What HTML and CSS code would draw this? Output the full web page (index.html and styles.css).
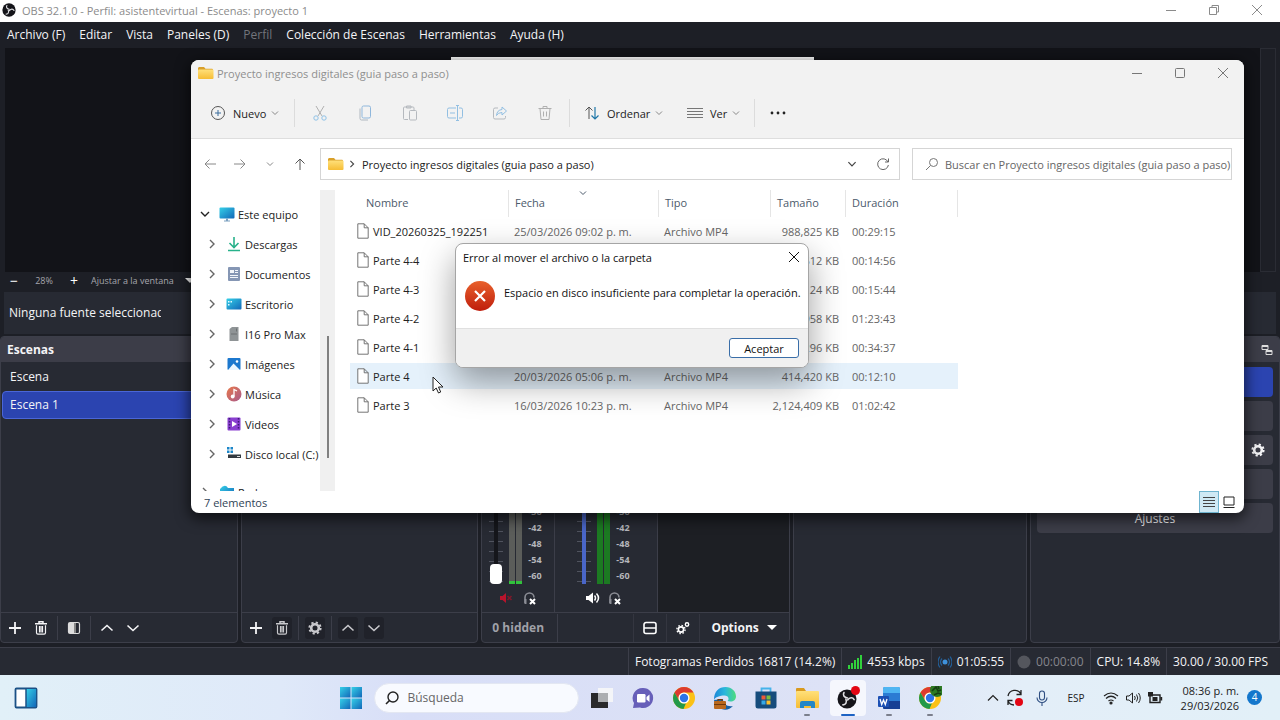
FILE: index.html
```html
<!DOCTYPE html>
<html lang="es">
<head>
    <meta charset="UTF-8">
    <meta name="viewport" content="width=device-width, initial-scale=1.0">
    <title>OBS 32.1.0 - Perfil: asistentevirtual - Escenas: proyecto 1</title>
    <link rel="stylesheet" href="styles.css">
</head>
<body>

    <!-- Iconos que se repiten -->
    <svg class="sprite" width="0" height="0">
        <defs>
            <linearGradient id="gFolder" x1="0" y1="0" x2="0" y2="1"><stop offset="0" stop-color="#ffe07a"/><stop offset="1" stop-color="#f6bd35"/></linearGradient>
            <linearGradient id="gBlue" x1="0" y1="0" x2="1" y2="1"><stop offset="0" stop-color="#35d0e8"/><stop offset="1" stop-color="#1267b8"/></linearGradient>
            <linearGradient id="gRed" x1="0" y1="0" x2="0" y2="1"><stop offset="0" stop-color="#e8612c"/><stop offset="1" stop-color="#bf1d0c"/></linearGradient>
            <linearGradient id="gEdge" x1="0" y1="0" x2="1" y2="0"><stop offset="0" stop-color="#1b86d8"/><stop offset=".5" stop-color="#2bb8dc"/><stop offset="1" stop-color="#4fdc7c"/></linearGradient>
            <linearGradient id="gMusic" x1="0" y1="0" x2="1" y2="1"><stop offset="0" stop-color="#e8784a"/><stop offset="1" stop-color="#a85a8c"/></linearGradient>
        </defs>
        <symbol id="down" viewBox="0 0 10 10"><path d="M2 3.5 5 6.5 8 3.5" fill="none" stroke="currentColor"/></symbol>
        <symbol id="right" viewBox="0 0 10 10"><path d="M3 1 7 5 3 9" fill="none" stroke="currentColor" stroke-width="1.4"/></symbol>
        <symbol id="min" viewBox="0 0 12 12"><path d="M1 6.5h10" stroke="currentColor"/></symbol>
        <symbol id="close" viewBox="0 0 12 12"><path d="M1 1 11 11M11 1 1 11" stroke="currentColor" stroke-width="1"/></symbol>
        <symbol id="folder" viewBox="0 0 16 14"><path d="M0 2.500C0 1.600.6 1 1.500 1H6l1.500 1.800H14a1 1 0 0 1 1 1V6H0z" fill="#d9a02a"/><rect x="0" y="3.500" width="15.500" height="9.500" rx="1" fill="url(#gFolder)"/></symbol>
        <symbol id="file" viewBox="0 0 12 16"><path d="M.8.8h6.400l4 4v10.400H.8zM7.200.8v4h4" fill="#fff" stroke="#666" stroke-width=".9"/></symbol>
        <symbol id="plus" viewBox="0 0 12 12"><path d="M6 0v12M0 6h12" stroke="currentColor" stroke-width="1.8"/></symbol>
        <symbol id="trash" viewBox="0 0 14 14"><path d="M1 2.800h12M5 2V.8h4V2" fill="none" stroke="currentColor" stroke-width="1.500"/><path d="M2.500 4.200v7.600c0 1 .6 1.400 1.400 1.400h6.200c.9 0 1.400-.5 1.400-1.400V4.200M5.500 5v6.500M7 5v6.500M8.500 5v6.500" fill="none" stroke="currentColor" stroke-width="1.200"/></symbol>
        <symbol id="gear" viewBox="0 0 14 14"><circle cx="7" cy="7" r="3.800" fill="none" stroke="currentColor" stroke-width="2.600"/><circle cx="7" cy="7" r="5.600" fill="none" stroke="currentColor" stroke-width="2" stroke-dasharray="2.200 2.198"/></symbol>
        <symbol id="up-obs" viewBox="0 0 14 14"><path d="M1.500 9.500 7 4.500 12.500 9.500" fill="none" stroke="currentColor" stroke-width="1.600"/></symbol>
        <symbol id="down-obs" viewBox="0 0 14 14"><path d="M1.500 4.500 7 9.500 12.500 4.500" fill="none" stroke="currentColor" stroke-width="1.600"/></symbol>
        <symbol id="lens" viewBox="0 0 14 14"><circle cx="8.500" cy="5.500" r="4" fill="none" stroke="currentColor"/><path d="M5.500 8.500 1 13" stroke="currentColor"/></symbol>
        <symbol id="obs" viewBox="0 0 20 20"><circle cx="10" cy="10" r="9.500" fill="#15151a"/><g fill="none" stroke="#e0e0e4" stroke-width="1.600" stroke-linecap="round"><path d="M10.500 9C7 8.500 5.500 6 7 3.500"/><path d="M10.500 9C7 8.500 5.500 6 7 3.500" transform="rotate(120 10 10)"/><path d="M10.500 9C7 8.500 5.500 6 7 3.500" transform="rotate(240 10 10)"/></g></symbol>
        <symbol id="chrome" viewBox="0 0 24 24"><circle cx="12" cy="12" r="11" fill="#fbc116"/><path d="M2.500 6.500A11 11 0 0 1 21.500 6.500H12a5.500 5.500 0 0 0-4.800 8.200z" fill="#dd3b2f"/><path d="M2.500 6.500 7.200 14.700A5.500 5.500 0 0 0 14 17.100L11.500 23A11 11 0 0 1 2.500 6.500z" fill="#22994a"/><circle cx="12" cy="12" r="5.500" fill="#fff"/><circle cx="12" cy="12" r="4.200" fill="#2d74e8"/></symbol>
        <symbol id="phones" viewBox="0 0 14 14"><path d="M2 12V6.500a4.500 4.500 0 0 1 9 0" fill="none" stroke="#8b8d95" stroke-width="1.600"/><path d="M1.500 8h2v5h-2z" fill="#8b8d95"/><path d="M7 8l5 5M12 8l-5 5" stroke="#fff" stroke-width="2"/></symbol>
    </svg>

    <!-- Ventana de OBS -->
    <main class="obs">
        <header class="obs-title">
            <svg class="ic14"><use href="#obs"/></svg>
            <span>OBS 32.1.0 - Perfil: asistentevirtual - Escenas: proyecto 1</span>
            <div class="win-buttons">
                <button aria-label="Minimizar"><svg class="ic12"><use href="#min"/></svg></button>
                <button aria-label="Restaurar"><svg class="ic12" viewBox="0 0 12 12"><path d="M1.500 3.500h7v7h-7zM4 3V1.500h6.500V8H9" fill="none" stroke="currentColor"/></svg></button>
                <button aria-label="Cerrar"><svg class="ic12"><use href="#close"/></svg></button>
            </div>
        </header>
        <nav class="obs-menu">
            <a href="#">Archivo (F)</a>
            <a href="#">Editar</a>
            <a href="#">Vista</a>
            <a href="#">Paneles (D)</a>
            <a href="#" class="off">Perfil</a>
            <a href="#">Colección de Escenas</a>
            <a href="#">Herramientas</a>
            <a href="#">Ayuda (H)</a>
        </nav>

        <section class="preview">
            <div class="preview-area"><div class="canvas"></div></div>
            <div class="preview-scroll"></div>
        </section>
        <div class="zoom-row">
            <button aria-label="Alejar">−</button>
            <span class="zoom-value">28%</span>
            <button aria-label="Acercar">+</button>
            <span class="zoom-fit">Ajustar a la ventana</span>
            <i class="caret"></i>
        </div>
        <div class="context-bar"><span>Ninguna fuente seleccionada</span></div>

        <div class="docks">
            <section class="dock">
                <h2>Escenas</h2>
                <ul class="scenes">
                    <li>Escena</li>
                    <li class="selected">Escena 1</li>
                </ul>
                <footer class="dock-tools">
                    <button aria-label="Añadir"><svg class="ic12"><use href="#plus"/></svg></button>
                    <button aria-label="Eliminar"><svg class="ic14"><use href="#trash"/></svg></button>
                    <hr>
                    <button aria-label="Filtros"><svg class="ic14" viewBox="0 0 14 14"><rect x="1.500" y="1.500" width="11" height="11" rx="1.500" fill="none" stroke="#ddd" stroke-width="1.200"/><path d="M2 2h5v10H2z" fill="#ddd"/><path d="M7 2h2v10H7z" fill="#888"/></svg></button>
                    <hr>
                    <button aria-label="Subir"><svg class="ic14"><use href="#up-obs"/></svg></button>
                    <button aria-label="Bajar"><svg class="ic14"><use href="#down-obs"/></svg></button>
                </footer>
            </section>

            <section class="dock">
                <h2></h2>
                <div class="dock-body"></div>
                <footer class="dock-tools">
                    <button aria-label="Añadir"><svg class="ic12"><use href="#plus"/></svg></button>
                    <button class="dim" aria-label="Eliminar"><svg class="ic14"><use href="#trash"/></svg></button>
                    <hr>
                    <button class="dim" aria-label="Propiedades"><svg class="ic14"><use href="#gear"/></svg></button>
                    <hr>
                    <button class="dim" aria-label="Subir"><svg class="ic14"><use href="#up-obs"/></svg></button>
                    <button class="dim" aria-label="Bajar"><svg class="ic14"><use href="#down-obs"/></svg></button>
                </footer>
            </section>

            <section class="dock">
                <h2></h2>
                <div class="mixer">
                    <div class="channel muted">
                        <div class="levels">
                            <input type="range" class="fader" value="0" aria-label="Volumen del micrófono">
                            <div class="meter"><i></i><i></i></div>
                            <ol><li>-36</li><li>-42</li><li>-48</li><li>-54</li><li>-60</li></ol>
                        </div>
                        <div class="channel-buttons">
                            <button aria-label="Silenciar"><svg class="ic14" viewBox="0 0 14 14"><path d="M1 5h2.500L7 2v10L3.500 9H1z" fill="#b8142c"/><path d="M8.500 5l4 4M12.500 5l-4 4" stroke="#7d1a2b" stroke-width="1.600"/></svg></button>
                            <button aria-label="Monitorizar"><svg class="ic14"><use href="#phones"/></svg></button>
                        </div>
                    </div>
                    <div class="channel live">
                        <div class="levels">
                            <input type="range" class="fader" value="100" aria-label="Volumen del escritorio">
                            <div class="meter"><i></i><i></i></div>
                            <ol><li>-36</li><li>-42</li><li>-48</li><li>-54</li><li>-60</li></ol>
                        </div>
                        <div class="channel-buttons">
                            <button aria-label="Silenciar"><svg class="ic14" viewBox="0 0 14 14"><path d="M0 5h2.500L7 1.500v11L2.500 9H0z" fill="#fff"/><path d="M8.500 4.500q2 2.500 0 5M10.500 2.500q4 4.500 0 9" fill="none" stroke="#fff" stroke-width="1.500"/></svg></button>
                            <button aria-label="Monitorizar"><svg class="ic14"><use href="#phones"/></svg></button>
                        </div>
                    </div>
                    <div class="mixer-empty"></div>
                </div>
                <footer class="dock-tools mixer-tools">
                    <span class="hidden-count">0 hidden</span>
                    <button aria-label="Distribución"><svg class="ic14" viewBox="0 0 14 14"><path d="M3 1.500h8a2 2 0 0 1 2 2v7a2 2 0 0 1-2 2H3a2 2 0 0 1-2-2v-7a2 2 0 0 1 2-2zM1 7h12" fill="none" stroke="#fff" stroke-width="1.600"/></svg></button>
                    <button aria-label="Propiedades avanzadas"><svg class="ic14" viewBox="0 0 14 14"><circle cx="5" cy="8.500" r="2.600" fill="none" stroke="#fff" stroke-width="1.600"/><circle cx="5" cy="8.500" r="4.100" fill="none" stroke="#fff" stroke-width="1.400" stroke-dasharray="1.500 1.720"/><circle cx="11" cy="3.500" r="1.700" fill="none" stroke="#fff" stroke-width="1.400"/></svg></button>
                    <button class="options">Options <i class="caret"></i></button>
                </footer>
            </section>

            <section class="dock">
                <h2></h2>
                <div class="dock-body"></div>
            </section>

            <section class="dock">
                <h2><svg class="ic12" viewBox="0 0 12 12"><path d="M1 1.500h6v4H1zM5 6.500h6v4H5z" fill="none" stroke="#ddd"/><path d="M1 2h6M5 7h6" stroke="#ddd" stroke-width="2"/></svg></h2>
                <div class="controls">
                    <button class="active"></button>
                    <button></button>
                    <button><svg class="ic14"><use href="#gear"/></svg></button>
                    <button></button>
                    <button>Ajustes</button>
                </div>
            </section>
        </div>

        <footer class="obs-status">
            <span>Fotogramas Perdidos 16817 (14.2%)</span>
            <span><svg class="ic14" viewBox="0 0 14 14"><path d="M0 10h2v4H0zM3 8h2v6H3zM6 5h2v9H6zM9 3h2v11H9zM12 0h2v14h-2z" fill="#31d23c"/></svg>4553 kbps</span>
            <span><svg class="ic14" viewBox="0 0 14 14"><circle cx="7" cy="7" r="2.500" fill="#3f92dc"/><path d="M4 3.500q-3 3.500 0 7M10 3.500q3 3.500 0 7M2 1.500q-4 5.500 0 11M12 1.500q4 5.500 0 11" fill="none" stroke="#235f98" stroke-width="1.200"/></svg>01:05:55</span>
            <span class="off"><svg class="ic14" viewBox="0 0 14 14"><circle cx="7" cy="7" r="6.500" fill="#54565d"/></svg>00:00:00</span>
            <span>CPU: 14.8%</span>
            <span>30.00 / 30.00 FPS</span>
        </footer>
    </main>

    <!-- Explorador de archivos -->
    <section class="explorer">
        <header class="exp-title">
            <svg class="folder"><use href="#folder"/></svg>
            <span>Proyecto ingresos digitales (guia paso a paso)</span>
            <div class="win-buttons">
                <button aria-label="Minimizar"><svg class="ic12"><use href="#min"/></svg></button>
                <button aria-label="Maximizar"><svg class="ic12" viewBox="0 0 12 12"><rect x="1.500" y="1.500" width="9" height="9" rx="1" fill="none" stroke="currentColor"/></svg></button>
                <button aria-label="Cerrar"><svg class="ic12"><use href="#close"/></svg></button>
            </div>
        </header>
        <div class="exp-tools">
            <button class="tool-new"><svg class="ic16" viewBox="0 0 16 16"><circle cx="8" cy="8" r="6.500" fill="none" stroke="#555"/><path d="M8 5v6M5 8h6" stroke="#3a6d9c"/></svg>Nuevo<svg class="ic10"><use href="#down"/></svg></button>
            <hr>
            <button class="tool-icon" aria-label="Cortar"><svg class="ic16" viewBox="0 0 16 16" fill="none"><path d="M4 1l6 10M12 1L6 11" stroke="#b0b0b0"/><circle cx="4" cy="13" r="2.200" stroke="#8fc1e6"/><circle cx="12" cy="13" r="2.200" stroke="#8fc1e6"/></svg></button>
            <button class="tool-icon" aria-label="Copiar"><svg class="ic16" viewBox="0 0 16 16" fill="none"><rect x="5" y="1" width="8.500" height="12" rx="1.500" stroke="#8fb7dc"/><path d="M3 3.500v10a1.500 1.500 0 0 0 1.500 1.500H11" stroke="#b0b8c0"/></svg></button>
            <button class="tool-icon" aria-label="Pegar"><svg class="ic16" viewBox="0 0 16 16" fill="none" stroke="#b5b9be"><path d="M6 14.500H2.500a1 1 0 0 1-1-1V3a1 1 0 0 1 1-1H11a1 1 0 0 1 1 1v2M4.500 1h4.500v2H4.500z"/><rect x="7.500" y="5.500" width="7" height="9.500" rx="1"/></svg></button>
            <button class="tool-icon" aria-label="Cambiar nombre"><svg class="ic16" viewBox="0 0 16 16" fill="none" stroke="#92bfe2"><path d="M9 3H2a1.500 1.500 0 0 0-1.500 1.500v7A1.500 1.500 0 0 0 2 13h7M12 3h2a1.500 1.500 0 0 1 1.500 1.500v7A1.500 1.500 0 0 1 14 13h-2M10.500 1v14M9 .500h3M9 15.500h3M3 8h5"/></svg></button>
            <button class="tool-icon" aria-label="Compartir"><svg class="ic16" viewBox="0 0 16 16" fill="none"><path d="M6 3H3a1.500 1.500 0 0 0-1.500 1.500v8A1.500 1.500 0 0 0 3 14h9a1.500 1.500 0 0 0 1.500-1.500V11" stroke="#b5b9be"/><path d="M10 2l4.500 4L10 10V7.500Q6 7.500 4.500 10.500 5 5 10 4.500z" stroke="#92bfe2"/></svg></button>
            <button class="tool-icon" aria-label="Eliminar"><svg class="ic16" viewBox="0 0 16 16" fill="none" stroke="#b0b0b0"><path d="M1.500 3.500h13M6 3.500V1.500h4v2M3 3.500l1 11h8l1-11M6.500 6.500v5M9.500 6.500v5"/></svg></button>
            <hr>
            <button class="tool-sort"><svg class="ic16" viewBox="0 0 16 16" fill="none"><path d="M5 14V2M1.500 5.500 5 2l3.500 3.500" stroke="#555"/><path d="M11 2v12M7.500 10.500 11 14l3.500-3.500" stroke="#1f77a8" stroke-width="1.200"/></svg>Ordenar<svg class="ic10"><use href="#down"/></svg></button>
            <button class="tool-view"><svg class="ic16" viewBox="0 0 16 16"><path d="M0 3.500h16M0 6.500h16M0 9.500h16M0 12.500h16" stroke="#777"/></svg>Ver<svg class="ic10"><use href="#down"/></svg></button>
            <hr>
            <button class="tool-more" aria-label="Más"><svg class="ic16" viewBox="0 0 16 16" fill="#222"><circle cx="2" cy="8" r="1.400"/><circle cx="8" cy="8" r="1.400"/><circle cx="14" cy="8" r="1.400"/></svg></button>
        </div>
        <div class="exp-nav">
            <div class="arrows">
                <button aria-label="Atrás"><svg class="ic12" viewBox="0 0 12 12" fill="none" stroke="#888"><path d="M12 6H1M5.500 1.500 1 6l4.500 4.500"/></svg></button>
                <button aria-label="Adelante"><svg class="ic12" viewBox="0 0 12 12" fill="none" stroke="#888"><path d="M0 6h11M6.500 1.500 11 6l-4.500 4.500"/></svg></button>
                <button aria-label="Recientes"><svg class="ic10"><use href="#down"/></svg></button>
                <button aria-label="Subir"><svg class="ic12" viewBox="0 0 12 12" fill="none" stroke="#555"><path d="M6 12V1M1.500 5.500 6 1l4.500 4.500"/></svg></button>
            </div>
            <div class="address">
                <svg class="folder"><use href="#folder"/></svg>
                <svg class="crumb"><use href="#right"/></svg>
                <span>Proyecto ingresos digitales (guia paso a paso)</span>
                <svg class="ic12"><use href="#down"/></svg>
                <svg class="reload ic14" viewBox="0 0 14 14" fill="none" stroke="#666"><path d="M12 5A5.400 5.400 0 1 0 12.400 8M12.500 1.500V5H9"/></svg>
            </div>
            <label class="search">
                <svg class="ic14"><use href="#lens"/></svg>
                <input type="text" placeholder="Buscar en Proyecto ingresos digitales (guia paso a paso)">
            </label>
        </div>
        <div class="exp-body">
            <ul class="tree">
                <li class="root"><svg class="arrow" viewBox="0 0 10 10"><path d="M1 3l4 4 4-4" fill="none" stroke="#222" stroke-width="1.400"/></svg><svg class="ic16" viewBox="0 0 16 16"><rect x=".500" y="1.500" width="15" height="11" rx="1" fill="url(#gBlue)"/><path d="M7 12.500h2v2h2v1H5v-1h2z" fill="#7a9fc0"/></svg>Este equipo</li>
                <li><svg class="arrow"><use href="#right"/></svg><svg class="ic16" viewBox="0 0 16 16" fill="none" stroke="#28b28b" stroke-width="1.600"><path d="M8 1v10M3.500 7 8 11.500 12.500 7M2 14.500h12"/></svg>Descargas</li>
                <li><svg class="arrow"><use href="#right"/></svg><svg class="ic16" viewBox="0 0 16 16"><rect x="2" y="1" width="12" height="14" rx="1" fill="#8596b4"/><path d="M4 4h4v3H4zM9 4h3v1H9zM9 6h3v1H9zM4 9h8v1H4zM4 11h8v1H4z" fill="#f2f5fa"/></svg>Documentos</li>
                <li><svg class="arrow"><use href="#right"/></svg><svg class="ic16" viewBox="0 0 16 16"><rect x=".500" y="2.500" width="15" height="11" rx="1" fill="url(#gBlue)"/><path d="M2 5h1.500v1.500H2zM2 8h1.500v1.500H2zM4.500 5H6v1.500H4.500z" fill="#e9fbff"/></svg>Escritorio</li>
                <li><svg class="arrow"><use href="#right"/></svg><svg class="ic16" viewBox="0 0 16 16"><path d="M3.500 3 6 1h6.500v14h-9z" fill="#8f9496"/><path d="M10.500 2.500v3M5 8h6" stroke="#6c7173"/></svg>I16 Pro Max</li>
                <li><svg class="arrow"><use href="#right"/></svg><svg class="ic16" viewBox="0 0 16 16"><rect x="1.500" y="2" width="13" height="12" rx="1" fill="#1c78ce"/><path d="M2 14l5.500-6.500L14 14z" fill="#eaf6ff"/><circle cx="11" cy="5.500" r="1.300" fill="#fff"/></svg>Imágenes</li>
                <li><svg class="arrow"><use href="#right"/></svg><svg class="ic16" viewBox="0 0 16 16"><circle cx="8" cy="8" r="7.500" fill="url(#gMusic)"/><circle cx="6.700" cy="10.500" r="1.900" fill="#fff"/><path d="M8 10.500V3.500l3 1.500" fill="none" stroke="#fff" stroke-width="1.300"/></svg>Música</li>
                <li><svg class="arrow"><use href="#right"/></svg><svg class="ic16" viewBox="0 0 16 16"><rect x="1.500" y="1.500" width="13" height="13" rx="1" fill="#8a3fd0"/><path d="M3.500 2v12M12.500 2v12" stroke="#3f1a76" stroke-width="1.500" stroke-dasharray="1.500 1.500"/><path d="M6 5l5 3-5 3z" fill="#fff"/></svg>Videos</li>
                <li><svg class="arrow"><use href="#right"/></svg><svg class="ic16" viewBox="0 0 16 16"><path d="M1 1h2.500v2.500H1zM4.500 1H7v2.500H4.500zM1 4.500h2.500V7H1zM4.500 4.500H7V7H4.500z" fill="#1c86c8"/><path d="M2 8.500h13V12H2z" fill="#333a40"/><path d="M11 10.500h3" stroke="#ddd"/></svg>Disco local (C:)</li>
                <li class="root net"><svg class="arrow"><use href="#right"/></svg><svg class="ic16" viewBox="0 0 16 16"><path d="M1 5q5-6 8-1h6v9H4V9H1z" fill="url(#gBlue)"/></svg>Red</li>
            </ul>
            <div class="tree-scroll"><i></i></div>
            <div class="files">
                <table>
                    <colgroup><col class="c-name"><col class="c-date"><col class="c-type"><col class="c-size"><col class="c-time"></colgroup>
                    <thead>
                        <tr><th>Nombre</th><th>Fecha<svg class="sort"><use href="#down"/></svg></th><th>Tipo</th><th>Tamaño</th><th>Duración</th></tr>
                    </thead>
                    <tbody>
                        <tr><td><svg class="doc"><use href="#file"/></svg>VID_20260325_192251</td><td>25/03/2026 09:02 p. m.</td><td>Archivo MP4</td><td>988,825 KB</td><td>00:29:15</td></tr>
                        <tr><td><svg class="doc"><use href="#file"/></svg>Parte 4-4</td><td></td><td></td><td>512 KB</td><td>00:14:56</td></tr>
                        <tr><td><svg class="doc"><use href="#file"/></svg>Parte 4-3</td><td></td><td></td><td>124 KB</td><td>00:15:44</td></tr>
                        <tr><td><svg class="doc"><use href="#file"/></svg>Parte 4-2</td><td></td><td></td><td>958 KB</td><td>01:23:43</td></tr>
                        <tr><td><svg class="doc"><use href="#file"/></svg>Parte 4-1</td><td></td><td></td><td>296 KB</td><td>00:34:37</td></tr>
                        <tr class="hover"><td><svg class="doc"><use href="#file"/></svg>Parte 4</td><td>20/03/2026 05:06 p. m.</td><td>Archivo MP4</td><td>414,420 KB</td><td>00:12:10</td></tr>
                        <tr><td><svg class="doc"><use href="#file"/></svg>Parte 3</td><td>16/03/2026 10:23 p. m.</td><td>Archivo MP4</td><td>2,124,409 KB</td><td>01:02:42</td></tr>
                    </tbody>
                </table>
            </div>
        </div>
        <footer class="exp-status">
            <span>7 elementos</span>
            <button class="on" aria-label="Detalles"><svg class="ic12" viewBox="0 0 12 12"><path d="M0 1.500h12M0 4.500h12M0 7.500h12M0 10.500h12" stroke="#444"/></svg></button>
            <button aria-label="Iconos grandes"><svg class="ic12" viewBox="0 0 12 12"><path d="M1 1h10v8H1zM.500 11.500h11" fill="none" stroke="#222"/></svg></button>
        </footer>
    </section>

    <!-- Mensaje de error -->
    <div class="dialog" role="alertdialog">
        <header>
            <span>Error al mover el archivo o la carpeta</span>
            <button aria-label="Cerrar"><svg class="ic12"><use href="#close"/></svg></button>
        </header>
        <div class="dialog-body">
            <svg class="error" viewBox="0 0 30 30"><circle cx="15" cy="15" r="15" fill="url(#gRed)"/><path d="M10 10 20 20M20 10 10 20" stroke="#fff" stroke-width="2.200"/></svg>
            <p>Espacio en disco insuficiente para completar la operación.</p>
        </div>
        <footer><button>Aceptar</button></footer>
    </div>

    <svg class="cursor" viewBox="0 0 12 18"><path d="M1 1v14l3.200-3 2.300 5 2.200-1-2.200-5H11z" fill="#fff" stroke="#222"/></svg>

    <!-- Barra de tareas -->
    <footer class="taskbar">
        <div class="task-left">
            <button aria-label="Widgets"><svg class="ic24" viewBox="0 0 24 24"><rect x="1.500" y="2.500" width="21" height="19" rx="1" fill="#fff" stroke="#1b5186" stroke-width="1.800"/><path d="M12 3h10v18H12z" fill="url(#gBlue)"/><path d="M12 2v20" stroke="#1b5186" stroke-width="1.500"/></svg></button>
        </div>
        <div class="task-center">
            <button aria-label="Inicio"><svg class="ic24" viewBox="0 0 24 24" fill="url(#gBlue)"><path d="M1 1h10.500v10.500H1z"/><path d="M12.500 1H23v10.500H12.500z"/><path d="M1 12.500h10.500V23H1z"/><path d="M12.500 12.500H23V23H12.500z"/></svg></button>
            <label class="task-search">
                <svg class="ic14" viewBox="0 0 14 14"><circle cx="8" cy="6" r="5" fill="none" stroke="#222" stroke-width="1.400"/><path d="M4.500 9.500 1 13" stroke="#222" stroke-width="1.600"/></svg>
                <input type="text" placeholder="Búsqueda">
            </label>
            <button aria-label="Vista de tareas"><svg class="ic24" viewBox="0 0 24 24"><rect x="8" y="2" width="15" height="14" fill="#f4f5f8"/><rect x="1" y="7" width="17" height="15" fill="#29292b"/><path d="M8 7h10v9H8z" fill="#acaeb1"/></svg></button>
            <button aria-label="Chat"><svg class="ic24" viewBox="0 0 24 24"><path d="M12 2a10 10 0 1 1-3 19.500L2 22l1-5A10 10 0 0 1 12 2z" fill="#675fb9"/><rect x="6" y="8" width="8.500" height="8.500" rx="1.200" fill="#fff"/><path d="M15.500 11 18.500 8.500v7.500l-3-2.500z" fill="#fff"/></svg></button>
            <button aria-label="Chrome"><svg class="ic24"><use href="#chrome"/></svg></button>
            <button aria-label="Edge"><svg class="ic24" viewBox="0 0 24 24"><path d="M1 14A11 11 0 0 0 20 20C14 21 10 18 10 13Z" fill="#1460a5"/><path d="M1 14C1 5 6 1 12.500 1 19 1 23 5.500 23 10.500c0 4-4 6-8.500 4.500 1-1 1-1.500 1-2.500 0-2-2-3-4-3C7 9.500 2 11 1 14z" fill="url(#gEdge)"/><rect x="1" y="15" width="12" height="8" rx="1" fill="#b9681d"/><path d="M1 18.500h12M5 15v-1.500h4V15" fill="none" stroke="#70390c" stroke-width="1.200"/></svg></button>
            <button aria-label="Tienda"><svg class="ic24" viewBox="0 0 24 24"><path d="M7.500 6V2.500h9V6" fill="none" stroke="#46b3ea" stroke-width="1.800"/><path d="M1.500 5.500h21V20a2.500 2.500 0 0 1-2.500 2.500H4A2.500 2.500 0 0 1 1.500 20z" fill="#164c7c"/><path d="M7.500 9.500h4v4h-4z" fill="#ef5a38"/><path d="M12.500 9.500h4v4h-4z" fill="#81bd3e"/><path d="M7.500 14.500h4v4h-4z" fill="#36a9e6"/><path d="M12.500 14.500h4v4h-4z" fill="#fbc02d"/></svg></button>
            <button class="running" aria-label="Explorador"><svg class="ic24" viewBox="0 0 24 24"><path d="M1 3a1 1 0 0 1 1-1h7l2 3h12v6H1z" fill="#d99a1e"/><rect x="1" y="5" width="23" height="17" rx="1" fill="url(#gFolder)"/><path d="M5 22v-5a2 2 0 0 1 2-2h11a2 2 0 0 1 2 2v5z" fill="#2386c6"/><path d="M9 22v-2h7v2z" fill="#f6bd35"/></svg></button>
            <button class="running current" aria-label="OBS"><svg class="ic24" viewBox="0 0 24 24"><use href="#obs" x="1" y="3" width="20" height="20"/><circle cx="19.500" cy="4.500" r="4.500" fill="#e30613"/></svg></button>
            <button class="running" aria-label="Word"><svg class="ic24" viewBox="0 0 24 24"><rect x="6" y="1" width="17" height="22" rx="1.500" fill="#2b7cd3"/><path d="M7.500 1h14A1.500 1.500 0 0 1 23 2.500V7H6V2.500A1.500 1.500 0 0 1 7.500 1z" fill="#4fb5f2"/><path d="M6 15h17v8H7.500A1.500 1.500 0 0 1 6 21.500z" fill="#163f94"/><rect x="1" y="10" width="11" height="11" rx="1" fill="#1c50b4"/><path d="M3 13l1.700 5.500L6.500 14l1.800 4.500L10 13" fill="none" stroke="#fff" stroke-width="1.300"/></svg></button>
            <button class="running" aria-label="Chrome 2"><svg class="ic24" viewBox="0 0 24 24"><use href="#chrome"/><circle cx="19" cy="4" r="7" fill="#2d7a24"/><path d="M14 5l4-4 2 4 3-1M16 9l4-2 3 1M20 0l1 3" fill="none" stroke="#173f14" stroke-width="1.600"/></svg></button>
        </div>
        <div class="task-right">
            <svg class="ic14" viewBox="0 0 14 14"><path d="M2 9.500 7 4.500 12 9.500" fill="none" stroke="#222" stroke-width="1.200"/></svg>
            <svg class="ic18" viewBox="0 0 18 18" fill="none" stroke="#222" stroke-width="1.300"><path d="M2 7A7 7 0 0 1 15 5M15 1v4.500h-4.500M2 16v-4.500h4.500M2 12a7 7 0 0 0 6 4"/><circle cx="13" cy="13" r="4" fill="#e30613" stroke="none"/></svg>
            <svg class="ic16" viewBox="0 0 16 16" fill="none" stroke="#2f4f82" stroke-width="1.100"><rect x="5.500" y="1" width="5" height="9" rx="2.500"/><path d="M3 7.500a5 5 0 0 0 10 0M8 12.500V16"/></svg>
            <span class="lang">ESP</span>
            <svg class="ic16" viewBox="0 0 16 16" fill="none" stroke="#222" stroke-width="1.200"><path d="M1 6q7-6 14 0M3 8.500q5-4.500 10 0M5.500 11q2.500-2 5 0"/><circle cx="8" cy="13" r="1" fill="#222"/></svg>
            <svg class="ic16" viewBox="0 0 16 16" fill="none" stroke="#222"><path d="M1.500 6H4l3.500-3v10L4 10H1.500zM9.500 6q1.500 2 0 4M11.500 4.500q2.500 3.500 0 7M13.500 3q3.500 5 0 10"/></svg>
            <svg class="ic16" viewBox="0 0 16 16"><path d="M3 5h10v7.500H3zM14.500 7v3.500" fill="none" stroke="#222" stroke-width="1.400"/><path d="M5.500 7h5v4h-5zM1 2h5v4.500H1z" fill="#222"/></svg>
            <div class="clock"><span>08:36 p. m.</span><span>29/03/2026</span></div>
            <span class="badge">4</span>
        </div>
    </footer>

</body>
</html>
```
FILE: styles.css
```css
* {
    box-sizing: border-box;
}
body {
    margin: 0;
    height: 100vh;
    min-height: 700px;
    display: flex;
    flex-direction: column;
    overflow: hidden;
    font-family: "Open Sans", "Noto Sans", sans-serif;
    font-size: 11px;
    color: #222;
    background-color: #1d1f26;
}
button {
    display: flex;
    align-items: center;
    justify-content: center;
    padding: 0;
    border: none;
    background: none;
    font: inherit;
    color: inherit;
}
input {
    min-width: 0;
    padding: 0;
    border: none;
    outline: none;
    background: none;
    font: inherit;
}
ul, ol {
    margin: 0;
    padding: 0;
    list-style: none;
}
svg {
    flex: none;
}
.sprite {
    position: absolute;
}
.ic10 { width: 10px; height: 10px; }
.ic12 { width: 12px; height: 12px; }
.ic14 { width: 14px; height: 14px; }
.ic16 { width: 16px; height: 16px; }
.ic18 { width: 18px; height: 18px; }
.ic24 { width: 24px; height: 24px; }
.folder { width: 16px; height: 14px; }
.caret {
    border: 5px solid transparent;
    border-top-color: #fff;
    border-bottom: none;
}
.win-buttons {
    display: flex;
    margin-left: auto;
}
.win-buttons button {
    width: 43px;
}

/* OBS */
.obs {
    flex: 1;
    display: flex;
    flex-direction: column;
    min-height: 0;
    font-size: 12px;
    color: #f4f4f6;
}
.obs-title {
    display: flex;
    align-items: center;
    gap: 6px;
    height: 22px;
    padding: 0 2px 2px;
    background-color: #fff;
    color: #8b8b8b;
    font-size: 11px;
}
.obs-menu {
    display: flex;
    align-items: center;
    gap: 14px;
    height: 26px;
    padding: 0 0 2px 7px;
}
.obs-menu a {
    color: inherit;
    text-decoration: none;
}
.obs-menu .off {
    color: #73757c;
}
.preview {
    flex: 1;
    display: flex;
    padding: 0 4px 0 5px;
}
.preview-area {
    flex: 1;
    display: flex;
    justify-content: center;
    padding: 9px 0;
    background-color: #121318;
}
.canvas {
    width: 29%;
    background-color: #fff;
}
.preview-scroll {
    width: 16px;
    border: 1px solid #2a2c34;
}
.zoom-row {
    display: flex;
    align-items: center;
    height: 16px;
    padding-left: 9px;
    font-size: 9px;
    color: #a5a6ac;
}
.zoom-row button {
    width: 10px;
    font-size: 14px;
    color: #fff;
}
.zoom-value {
    width: 50px;
    text-align: center;
}
.zoom-fit {
    width: 106px;
    padding-left: 12px;
    white-space: nowrap;
}
.context-bar {
    display: flex;
    align-items: center;
    height: 42px;
    margin: 4px 4px 2px;
    padding: 0 0 2px 5px;
    background-color: #272a33;
}
.context-bar span {
    width: 152px;
    overflow: hidden;
    white-space: nowrap;
}
.docks {
    flex: none;
    display: grid;
    grid-template-rows: 100%;
    grid-template-columns: 238fr 237fr 308fr 234fr 250fr;
    gap: 3px;
    height: 307px;
}
.dock {
    display: flex;
    flex-direction: column;
    min-width: 0;
    overflow: hidden;
    border: 1px solid #3c3e49;
    border-radius: 4px;
    background-color: #272a33;
}
.dock h2 {
    display: flex;
    flex: none;
    align-items: center;
    height: 25px;
    margin: 0;
    padding: 0 6px;
    background-color: #3c3d48;
    font-size: 12px;
}
.dock h2 svg {
    margin-left: auto;
}
.dock-body, .scenes {
    flex: 1;
}
.scenes {
    padding: 1px;
}
.scenes li {
    height: 28px;
    padding-left: 7px;
    border: 1px solid transparent;
    line-height: 26px;
}
.scenes .selected {
    border-color: #4a66d8;
    border-radius: 4px;
    background-color: #2b44b0;
}
.dock-tools {
    display: flex;
    flex: none;
    align-items: center;
    gap: 6px;
    height: 30px;
    padding: 0 4px;
    border-top: 1px solid #3c3e49;
}
.dock-tools button {
    width: 20px;
    height: 22px;
    border-radius: 3px;
}
.dock-tools .dim {
    background-color: #20222a;
    color: #c8c8cc;
}
.dock-tools hr {
    width: 1px;
    height: 24px;
    margin: 0;
    border: none;
    background-color: #3c3e49;
}
.mixer {
    flex: 1;
    display: flex;
    min-height: 0;
}
.channel {
    display: flex;
    flex-direction: column;
    border-right: 1px solid #3c3e49;
}
.muted {
    width: 73px;
    padding-left: 7px;
}
.live {
    width: 103px;
    padding-left: 22px;
}
.levels {
    flex: 1;
    display: flex;
    min-height: 0;
}
.fader {
    appearance: none;
    writing-mode: vertical-lr;
    direction: rtl;
    width: 14px;
    height: auto;
    margin: 0;
    background:
        linear-gradient(#15161b, #15161b) center / 4px 100% no-repeat,
        repeating-linear-gradient(transparent 0 9px, #50535e 9px 10px);
}
.live .fader {
    background:
        linear-gradient(#4a66c8, #4a66c8) center / 4px 100% no-repeat,
        repeating-linear-gradient(transparent 0 9px, #50535e 9px 10px);
}
.fader::-webkit-slider-thumb {
    appearance: none;
    width: 12px;
    height: 20px;
    border-radius: 4px;
    background-color: #fff;
}
.meter {
    display: flex;
    gap: 1px;
    margin: 0 6px;
}
.meter i {
    width: 6px;
    background: linear-gradient(#5b5d5a, #5b5d5a) top / 100% calc(100% - 3px) no-repeat, #31c23c;
}
.live .meter i {
    background: #1c7a22;
}
.levels ol {
    align-self: flex-end;
    font-size: 9px;
    line-height: 16px;
    font-weight: bold;
    color: #b6b7bc;
}
.channel-buttons {
    display: flex;
    gap: 10px;
    height: 28px;
    padding-left: 10px;
}
.live .channel-buttons {
    gap: 8px;
    padding-left: 9px;
}
.mixer-empty {
    flex: 1;
    background-color: #1d1f24;
}
.mixer-tools {
    gap: 0;
    padding: 0;
    font-weight: bold;
}
.hidden-count {
    width: 76px;
    margin-right: auto;
    padding-left: 10px;
    border-right: 1px solid #3c3e49;
    line-height: 28px;
    color: #a0a1a8;
}
.mixer-tools button {
    width: 33px;
    height: 28px;
    border-left: 1px solid #343640;
    border-radius: 0;
}
.mixer-tools .options {
    gap: 8px;
    width: 90px;
}
.controls {
    display: flex;
    flex-direction: column;
    gap: 4px;
    padding: 5px 6px;
}
.controls button {
    height: 30px;
    border-radius: 4px;
    background-color: #3c3d48;
}
.controls .active {
    background-color: #2b44b0;
}
.controls button svg {
    margin: 0 8px 0 auto;
}
.obs-status {
    display: flex;
    flex: none;
    justify-content: flex-end;
    height: 28px;
    margin-top: 4px;
    padding-right: 6px;
    border-top: 1px solid #3c3e49;
    background-color: #272a33;
}
.obs-status span {
    display: flex;
    align-items: center;
    gap: 5px;
    padding: 0 6px;
    border-left: 1px solid #3c3e49;
    white-space: nowrap;
}
.obs-status .off {
    color: #85868c;
}

/* Explorador */
.explorer {
    position: absolute;
    top: 60px;
    right: 36px;
    bottom: 207px;
    left: 191px;
    display: flex;
    flex-direction: column;
    overflow: hidden;
    border-radius: 8px;
    background-color: #fff;
    box-shadow: 0 4px 14px 2px rgba(0, 0, 0, 0.6);
}
.exp-title {
    display: flex;
    align-items: center;
    gap: 3px;
    height: 28px;
    padding: 0 0 2px 7px;
    background-color: #f2f2f2;
    color: #8f8f8f;
}
.explorer .win-buttons button {
    color: #777;
}
.exp-tools {
    display: flex;
    align-items: center;
    height: 51px;
    padding-left: 19px;
    border-bottom: 1px solid #dedede;
    background-color: #f2f2f2;
}
.exp-tools hr {
    width: 1px;
    height: 28px;
    margin: 0 2px;
    border: none;
    background-color: #dcdcdc;
}
.tool-new, .tool-sort, .tool-view {
    justify-content: flex-start;
    gap: 7px;
}
.exp-tools .ic10 {
    margin-left: -3px;
    color: #888;
}
.tool-new {
    width: 82px;
}
.tool-icon {
    width: 45px;
}
.tool-sort {
    width: 115px;
    padding-left: 12px;
}
.tool-view {
    width: 65px;
}
.tool-more {
    width: 42px;
}
.exp-nav {
    display: flex;
    align-items: center;
    height: 50px;
    padding-right: 12px;
}
.arrows {
    display: flex;
    flex: none;
    width: 129px;
    padding-left: 4px;
    color: #888;
}
.arrows button {
    width: 30px;
}
.address, .search {
    display: flex;
    align-items: center;
    height: 32px;
    border: 1px solid #d5d5d5;
}
.address {
    flex: 1;
    gap: 4px;
    padding: 0 9px 0 7px;
    color: #444;
}
.crumb {
    width: 8px;
    height: 8px;
    margin-right: 2px;
}
.address span {
    flex: 1;
    color: #222;
}
.reload {
    margin-left: 14px;
}
.search {
    width: 320px;
    margin-left: 12px;
    gap: 6px;
    padding-left: 12px;
    color: #777;
}
.search input {
    flex: 1;
}
.search input::placeholder {
    color: #666;
}
.exp-body {
    flex: 1;
    display: flex;
    min-height: 0;
    padding-top: 1px;
}
.tree {
    width: 129px;
    padding-top: 9px;
    overflow: hidden;
}
.tree li {
    display: flex;
    align-items: center;
    gap: 3px;
    height: 30px;
    padding-left: 16px;
    white-space: nowrap;
}
.tree .arrow {
    width: 10px;
    height: 10px;
    margin-right: 6px;
    color: #666;
}
.tree .root {
    padding-left: 9px;
}
.tree .net {
    margin-top: 8px;
}
.tree-scroll {
    display: flex;
    justify-content: center;
    align-items: flex-end;
    width: 15px;
    padding-bottom: 33px;
    background-color: #f0f0f0;
}
.tree-scroll i {
    width: 2px;
    height: 122px;
    background-color: #808080;
}
.files {
    flex: 1;
    padding-left: 15px;
}
table {
    width: 608px;
    table-layout: fixed;
    border-spacing: 0;
}
.c-name { width: 159px; }
.c-date { width: 150px; }
.c-type { width: 112px; }
.c-size { width: 75px; }
.c-time { width: 112px; }
th {
    position: relative;
    height: 27px;
    padding: 0 0 3px 6px;
    border-right: 1px solid #e5e5e5;
    text-align: left;
    font-weight: normal;
    color: #4c5a6b;
}
th:first-child {
    padding-left: 16px;
}
.sort {
    position: absolute;
    top: -2px;
    left: 69px;
    width: 10px;
    height: 10px;
}
td {
    height: 29px;
    padding: 0 0 0 5px;
    border: solid transparent;
    border-width: 1px 0 2px;
    background-clip: padding-box;
    white-space: nowrap;
    color: #666;
}
td:first-child {
    padding-left: 7px;
    color: #222;
}
td:nth-child(4) {
    padding: 0 7px 0 0;
    text-align: right;
}
td:last-child {
    padding-left: 6px;
}
.doc {
    width: 12px;
    height: 16px;
    margin-right: 4px;
    vertical-align: text-bottom;
}
.hover td {
    background-color: #e5f1fb;
}
.exp-status {
    display: flex;
    align-items: center;
    height: 22px;
    padding: 0 5px 0 13px;
    color: #2f4356;
}
.exp-status span {
    margin-right: auto;
}
.exp-status button {
    width: 20px;
    height: 22px;
    border: 1px solid transparent;
}
.exp-status .on {
    border-color: #6fb4cf;
    background-color: #cfe9f4;
}

/* Mensaje de error */
.dialog {
    position: absolute;
    top: 243px;
    left: 455px;
    width: 354px;
    overflow: hidden;
    border: 1px solid #a5a5a5;
    border-radius: 8px;
    background-color: #fff;
    box-shadow: 0 14px 34px rgba(0, 0, 0, 0.38);
    color: #111;
}
.dialog header {
    display: flex;
    align-items: center;
    justify-content: space-between;
    height: 26px;
    padding: 0 8px 0 7px;
}
.dialog-body {
    display: flex;
    gap: 9px;
    height: 58px;
    padding: 11px 9px;
}
.dialog-body p {
    margin: 4px 0;
    white-space: nowrap;
}
.error {
    width: 30px;
    height: 30px;
}
.dialog footer {
    display: flex;
    justify-content: flex-end;
    padding: 9px;
    border-top: 1px solid #e0e0e0;
    background-color: #f0f0f0;
}
.dialog footer button {
    width: 70px;
    height: 20px;
    border: 1px solid #3a6ea8;
    border-radius: 3px;
    background-color: #fff;
}
.cursor {
    position: absolute;
    top: 376px;
    left: 432px;
    width: 12px;
    height: 18px;
}

/* Barra de tareas */
.taskbar {
    display: grid;
    flex: none;
    grid-template-columns: 1fr auto 1fr;
    align-items: center;
    height: 45px;
    background: linear-gradient(90deg, #e1f0f8, #dfe9f9 22%, #d8def7 32%, #dde2f6 65%, #e3eef8 80%, #e2f0f8);
}
.task-left {
    padding-left: 14px;
}
.task-center {
    display: flex;
    align-items: center;
    gap: 5px;
}
.task-center button {
    position: relative;
    width: 36px;
    height: 36px;
    border-radius: 4px;
}
.task-center .current {
    background-color: #f5f7fd;
}
.running::after {
    content: "";
    position: absolute;
    bottom: 0;
    width: 6px;
    height: 2px;
    border-radius: 1px;
    background-color: #7b7f8c;
}
.current::after {
    width: 14px;
    background-color: #1d63c4;
}
.task-search {
    display: flex;
    align-items: center;
    gap: 9px;
    width: 205px;
    height: 30px;
    padding: 0 10px;
    border: 1px solid #e3e7f2;
    border-radius: 15px;
    background-color: #f8faff;
}
.task-search input {
    flex: 1;
    font-size: 12px;
}
.task-search input::placeholder {
    color: #666;
}
.task-right {
    display: flex;
    align-items: center;
    justify-content: flex-end;
    gap: 6px;
    padding-right: 18px;
}
.task-right .ic18 {
    margin-right: 4px;
}
.lang {
    margin: 0 12px;
    font-size: 10px;
}
.clock {
    display: flex;
    flex-direction: column;
    margin-left: 12px;
    text-align: right;
    line-height: 15px;
}
.badge {
    width: 15px;
    height: 15px;
    margin-left: 2px;
    border-radius: 50%;
    background-color: #1477cc;
    color: #fff;
    font-size: 10px;
    line-height: 15px;
    text-align: center;
}
```
